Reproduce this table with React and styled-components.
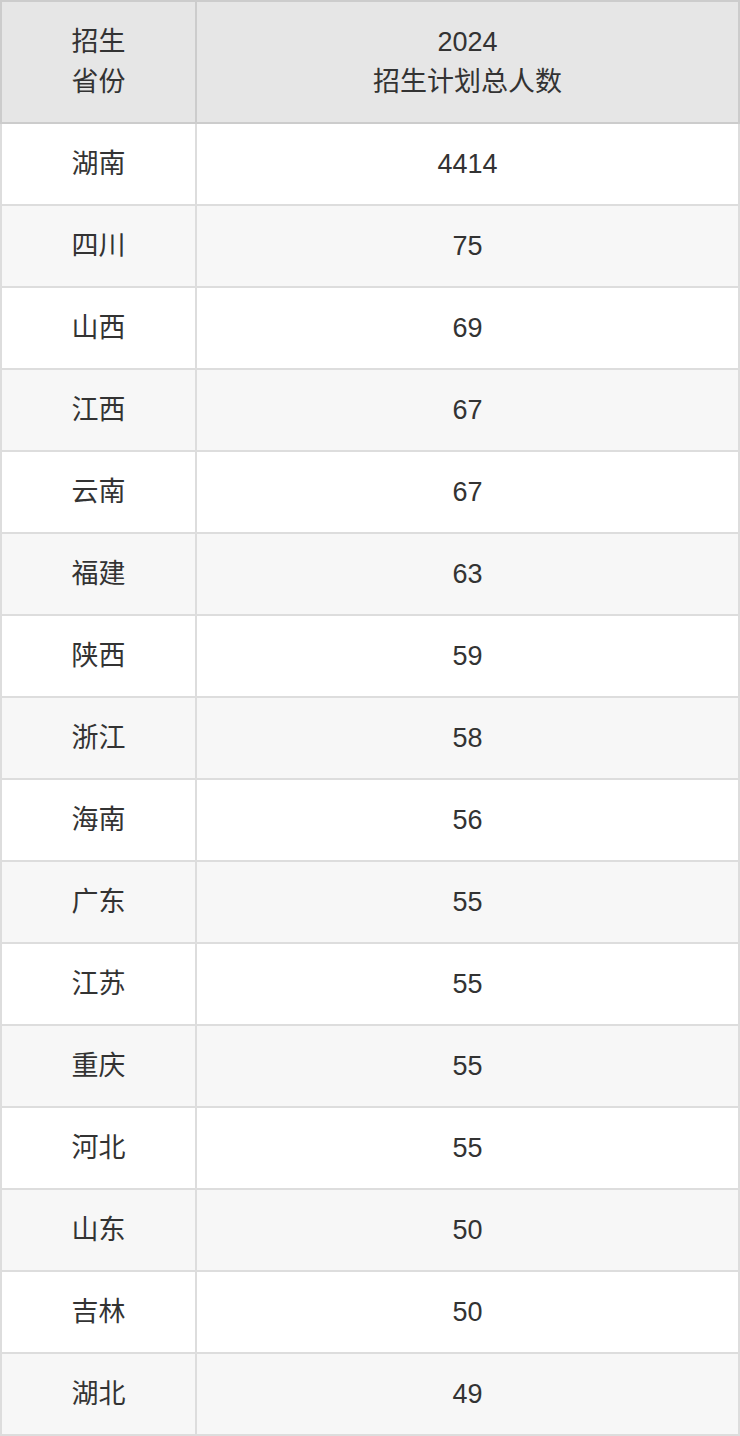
import React from 'react'
import styled, { createGlobalStyle } from 'styled-components'

const GlobalStyle = createGlobalStyle`
	html, body {
		margin: 0;
		padding: 0;
		background: #fff;
	}
	body {
		font-family: "Liberation Sans", "Noto Sans CJK SC", sans-serif;
		color: #333;
	}
`

const Table = styled.table`
	width: 740px;
	border-collapse: collapse;
	table-layout: fixed;
	font-size: 27px;
	line-height: 40px;
`

const HeadCell = styled.th`
	background: #e6e6e6;
	border: 2px solid #cccccc;
	font-weight: normal;
	padding: 20px 10px 20px;
	text-align: center;
	width: ${props => props.width || 'auto'};
`

const Row = styled.tr`
	background: ${props => (props.striped ? '#f7f7f7' : '#ffffff')};
`

const Cell = styled.td`
	border: 2px solid #dddddd;
	padding: 20px 10px;
	text-align: center;
`

const rows = [
	['湖南', 4414],
	['四川', 75],
	['山西', 69],
	['江西', 67],
	['云南', 67],
	['福建', 63],
	['陕西', 59],
	['浙江', 58],
	['海南', 56],
	['广东', 55],
	['江苏', 55],
	['重庆', 55],
	['河北', 55],
	['山东', 50],
	['吉林', 50],
	['湖北', 49]
]

export default function App() {
	return (
		<>
			<GlobalStyle />
			<Table>
				<thead>
					<tr>
						<HeadCell width="173px">
							招生
							<br />
							省份
						</HeadCell>
						<HeadCell>
							2024
							<br />
							招生计划总人数
						</HeadCell>
					</tr>
				</thead>
				<tbody>
					{rows.map(([province, count], i) => (
						<Row key={province + i} striped={i % 2 === 1}>
							<Cell>{province}</Cell>
							<Cell>{count}</Cell>
						</Row>
					))}
				</tbody>
			</Table>
		</>
	)
}
